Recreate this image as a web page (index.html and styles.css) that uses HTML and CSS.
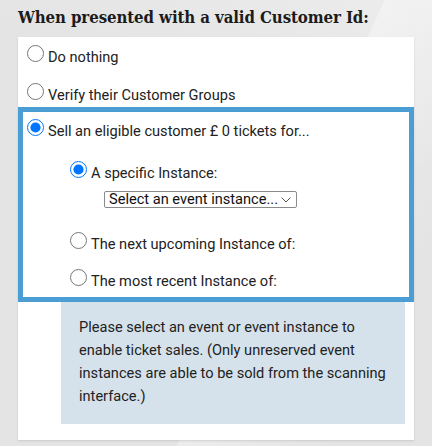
FILE: index.html
```html
<!DOCTYPE html>
<html lang="en">
<head>
  <meta charset="UTF-8">
  <meta name="viewport" content="width=device-width, initial-scale=1.0">
  <title>Scanning settings</title>
  <link rel="stylesheet" href="styles.css">
</head>
<body>
  <h2 class="title">When presented with a valid Customer Id:</h2>

  <form class="panel">
    <label class="option">
      <input type="radio" name="action" value="nothing">Do nothing
    </label>
    <label class="option option-gap">
      <input type="radio" name="action" value="verify">Verify their Customer Groups
    </label>

    <!-- selected action -->
    <div class="sell-box">
      <label class="option">
        <input type="radio" name="action" value="sell" checked>Sell an eligible customer £ 0 tickets for...
      </label>

      <div class="sub-options">
        <label class="option sub-first">
          <input type="radio" name="instance" value="specific" checked>A specific Instance:
        </label>
        <select class="instance-select">
          <option>Select an event instance...</option>
        </select>
        <label class="option sub-next">
          <input type="radio" name="instance" value="next">The next upcoming Instance of:
        </label>
        <label class="option sub-recent">
          <input type="radio" name="instance" value="recent">The most recent Instance of:
        </label>
      </div>
    </div>

    <div class="notice">
      Please select an event or event instance to enable ticket sales. (Only unreserved event instances are able to be sold from the scanning interface.)
    </div>
  </form>
</body>
</html>
```

FILE: styles.css
```css
body {
    margin: 0;
    padding: 0 18px;
    background-color: #e4e4e4;
    background-image:
      linear-gradient(115deg, rgba(255,255,255,0) 60%, rgba(255,255,255,0.35) 60.2%, rgba(255,255,255,0) 85%),
      linear-gradient(200deg, rgba(255,255,255,0.3) 0%, rgba(255,255,255,0) 30%);
    min-height: 446px;
    font-family: Roboto, "Liberation Sans", sans-serif;
    color: #222;
}

.title {
    margin: 0;
    padding-top: 5px;
    height: 32px;
    font-family: "DejaVu Serif Condensed", "DejaVu Serif", serif;
    font-stretch: condensed;
    font-weight: bold;
    font-size: 16.7px;
    letter-spacing: -0.1px;
    line-height: 24px;
    color: #1b1b1b;
}

.panel {
    background: white;
    padding: 8px 0 16px 0;
    box-shadow: 0 1px 2px rgba(0, 0, 0, 0.12);
}

.option {
    display: block;
    padding-left: 9px;
    font-size: 14.6px;
    line-height: 24px;
    height: 24px;
    white-space: nowrap;
}
.option input {
    width: 17px;
    height: 17px;
    margin: 0 4px 0 0;
    vertical-align: baseline;
}
.option-gap {
    margin-top: 14px;
}

.sell-box {
    border: 5px solid #4b9ed4;
    padding: 7px 0 4px 0;
}
.sell-box .option {
    padding-left: 4px;
}

.sub-options {
    padding-left: 47px;
}
.sell-box .sub-options .option {
    padding-left: 0;
}
.sub-first {
    margin-top: 18px;
}
.sub-next {
    margin-top: 24px;
}
.sub-recent {
    margin-top: 13px;
}

/* plain select with a thin chevron like the reference */
.instance-select {
    display: block;
    margin: 6px 0 0 34px;
    width: 193px;
    height: 17px;
    padding: 0 0 0 4px;
    appearance: none;
    font-family: Roboto, "Liberation Sans", sans-serif;
    font-size: 14.6px;
    line-height: 15px;
    color: #111;
    background: white url("data:image/svg+xml;utf8,<svg xmlns='http://www.w3.org/2000/svg' width='10' height='6' viewBox='0 0 10 6'><path d='M0.5 0.5 L5 5 L9.5 0.5' fill='none' stroke='%23555' stroke-width='1'/></svg>") no-repeat right 5px center;
    border: 1px solid #8a8a8a;
    border-radius: 2px;
}

.notice {
    margin-left: 43px;
    margin-right: 9px;
    padding: 14px 14px 16px 18px;
    background: #d6e2eb;
    font-size: 14.6px;
    line-height: 23px;
}
```
